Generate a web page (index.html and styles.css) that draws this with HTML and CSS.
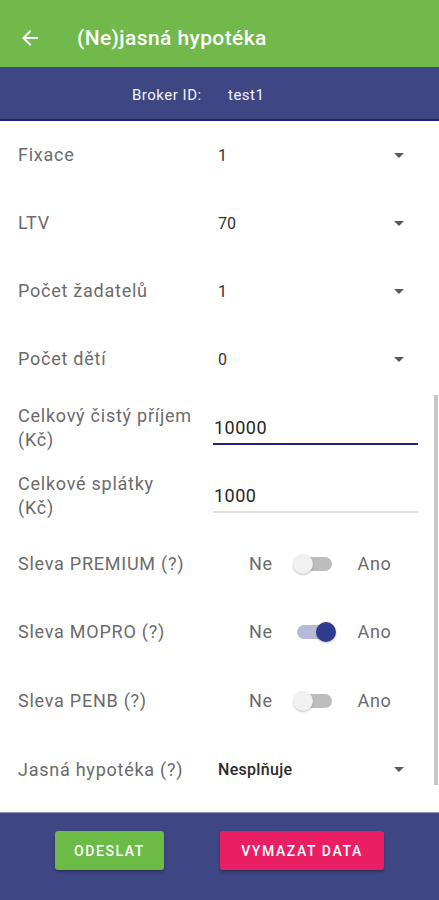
FILE: index.html
```html
<!DOCTYPE html>
<html lang="cs">
<head>
<meta charset="utf-8">
<title>(Ne)jasná hypotéka</title>
<link rel="stylesheet" href="styles.css">
</head>
<body>
<div class="app">
  <header class="appbar">
    <svg class="back" viewBox="0 0 24 24" width="24" height="24"><path fill="#fff" d="M20 11H7.83l5.59-5.59L12 4l-8 8 8 8 1.41-1.41L7.83 13H20v-2z"/></svg>
    <h1 class="title">(Ne)jasná hypotéka</h1>
  </header>
  <div class="broker">
    <span class="broker-label">Broker ID:</span>
    <span class="broker-id">test1</span>
  </div>
  <main class="form">
    <div class="row">
      <div class="label">Fixace</div>
      <div class="select"><span class="value">1</span><span class="caret"></span></div>
    </div>
    <div class="row">
      <div class="label">LTV</div>
      <div class="select"><span class="value">70</span><span class="caret"></span></div>
    </div>
    <div class="row">
      <div class="label">Počet žadatelů</div>
      <div class="select"><span class="value">1</span><span class="caret"></span></div>
    </div>
    <div class="row">
      <div class="label">Počet dětí</div>
      <div class="select"><span class="value">0</span><span class="caret"></span></div>
    </div>
    <div class="row row-tall">
      <div class="label">Celkový čistý příjem<br>(Kč)</div>
      <div class="input input-focused">10000</div>
    </div>
    <div class="row">
      <div class="label">Celkové splátky<br>(Kč)</div>
      <div class="input">1000</div>
    </div>
    <div class="row">
      <div class="label">Sleva PREMIUM (?)</div>
      <div class="switch-group"><span class="opt">Ne</span><span class="switch"><span class="thumb"></span></span><span class="opt">Ano</span></div>
    </div>
    <div class="row">
      <div class="label">Sleva MOPRO (?)</div>
      <div class="switch-group"><span class="opt">Ne</span><span class="switch switch-on"><span class="thumb"></span></span><span class="opt">Ano</span></div>
    </div>
    <div class="row row-tall">
      <div class="label">Sleva PENB (?)</div>
      <div class="switch-group"><span class="opt">Ne</span><span class="switch"><span class="thumb"></span></span><span class="opt">Ano</span></div>
    </div>
    <div class="row row-tall">
      <div class="label">Jasná hypotéka (?)</div>
      <div class="select"><span class="value value-strong">Nesplňuje</span><span class="caret"></span></div>
    </div>
    <div class="scrollbar"></div>
  </main>
  <footer class="footer">
    <button class="btn btn-send">ODESLAT</button>
    <button class="btn btn-clear">VYMAZAT DATA</button>
  </footer>
</div>
</body>
</html>
```
FILE: styles.css
```css
* { box-sizing: border-box; }
html, body { margin: 0; padding: 0; }
body {
  font-family: Roboto, "Noto Sans", "Liberation Sans", sans-serif;
  background: #fff;
}
.app {
  width: 439px;
  height: 900px;
  display: flex;
  flex-direction: column;
  overflow: hidden;
}
.appbar {
  height: 67px;
  background: #71b94b;
  display: flex;
  align-items: center;
  padding-left: 18px;
  padding-top: 8px;
}
.back { display: block; margin-right: 35px; }
.title {
  margin: 0;
  color: #fff;
  font-size: 21px;
  font-weight: 500;
  letter-spacing: 0.4px;
}
.broker {
  height: 54px;
  background: #3e4784;
  border-bottom: 2px solid #1c237a;
  display: flex;
  align-items: center;
  padding-left: 132px;
  padding-top: 3px;
  color: #f2f3f8;
  font-size: 15px;
  letter-spacing: 0.5px;
}
.broker-label { width: 96px; }
.form {
  flex: 1;
  position: relative;
  overflow: hidden;
}
.row {
  height: 68px;
  display: flex;
  align-items: center;
  padding-left: 18px;
}
.row-tall { height: 69px; }
.label {
  width: 195px;
  flex: none;
  font-size: 18px;
  letter-spacing: 0.75px;
  line-height: 24px;
  color: #6b6b6b;
}
.select {
  margin-left: 5px;
  width: 190px;
  display: flex;
  align-items: center;
  justify-content: space-between;
  padding-right: 4px;
}
.value { font-size: 16px; color: #333; }
.value-strong { font-weight: 500; letter-spacing: 0.3px; color: #2b2b2b; }
.caret {
  width: 0; height: 0;
  border-left: 5px solid transparent;
  border-right: 5px solid transparent;
  border-top: 5px solid #5a5a5a;
}
.input {
  width: 205px;
  font-size: 18px;
  letter-spacing: 0.5px;
  color: #262626;
  padding: 0 0 3px 1px;
  border-bottom: 2px solid #e0e0e0;
  line-height: 24px;
  margin-top: 5px;
}
.input-focused { border-bottom-color: #1c237a; }
.switch-group {
  display: flex;
  align-items: center;
  padding-left: 36px;
  font-size: 18px;
  letter-spacing: 0.6px;
  color: #6b6b6b;
}
.opt { line-height: 24px; }
.switch {
  position: relative;
  width: 35px;
  height: 14px;
  border-radius: 7px;
  background: #bdbdbd;
  margin: 0 26px 0 24px;
}
.thumb {
  position: absolute;
  top: -3px;
  left: -4px;
  width: 20px;
  height: 20px;
  border-radius: 50%;
  background: #f1f1f1;
  box-shadow: 0 1px 2px rgba(0,0,0,0.25);
}
.switch-on { background: #b6bad7; }
.switch-on .thumb { left: 19px; background: #2f3b8c; }
.scrollbar {
  position: absolute;
  right: 1px;
  top: 274px;
  width: 4px;
  height: 390px;
  background: #c6c6c6;
}
.footer {
  height: 88px;
  background: #3e4784;
  border-top: 1px solid #8c92c0;
  display: flex;
  align-items: center;
  justify-content: center;
  gap: 56px;
  padding-bottom: 12px;
}
.btn {
  border: none;
  height: 39px;
  border-radius: 3px;
  color: #fff;
  font-family: Roboto, "Noto Sans", sans-serif;
  font-size: 14px;
  font-weight: 500;
  letter-spacing: 1.6px;
  box-shadow: 0 2px 3px rgba(0,0,0,0.3);
}
.btn-send { width: 109px; background: #6cbb47; }
.btn-clear { width: 164px; background: #e91e63; }
```
